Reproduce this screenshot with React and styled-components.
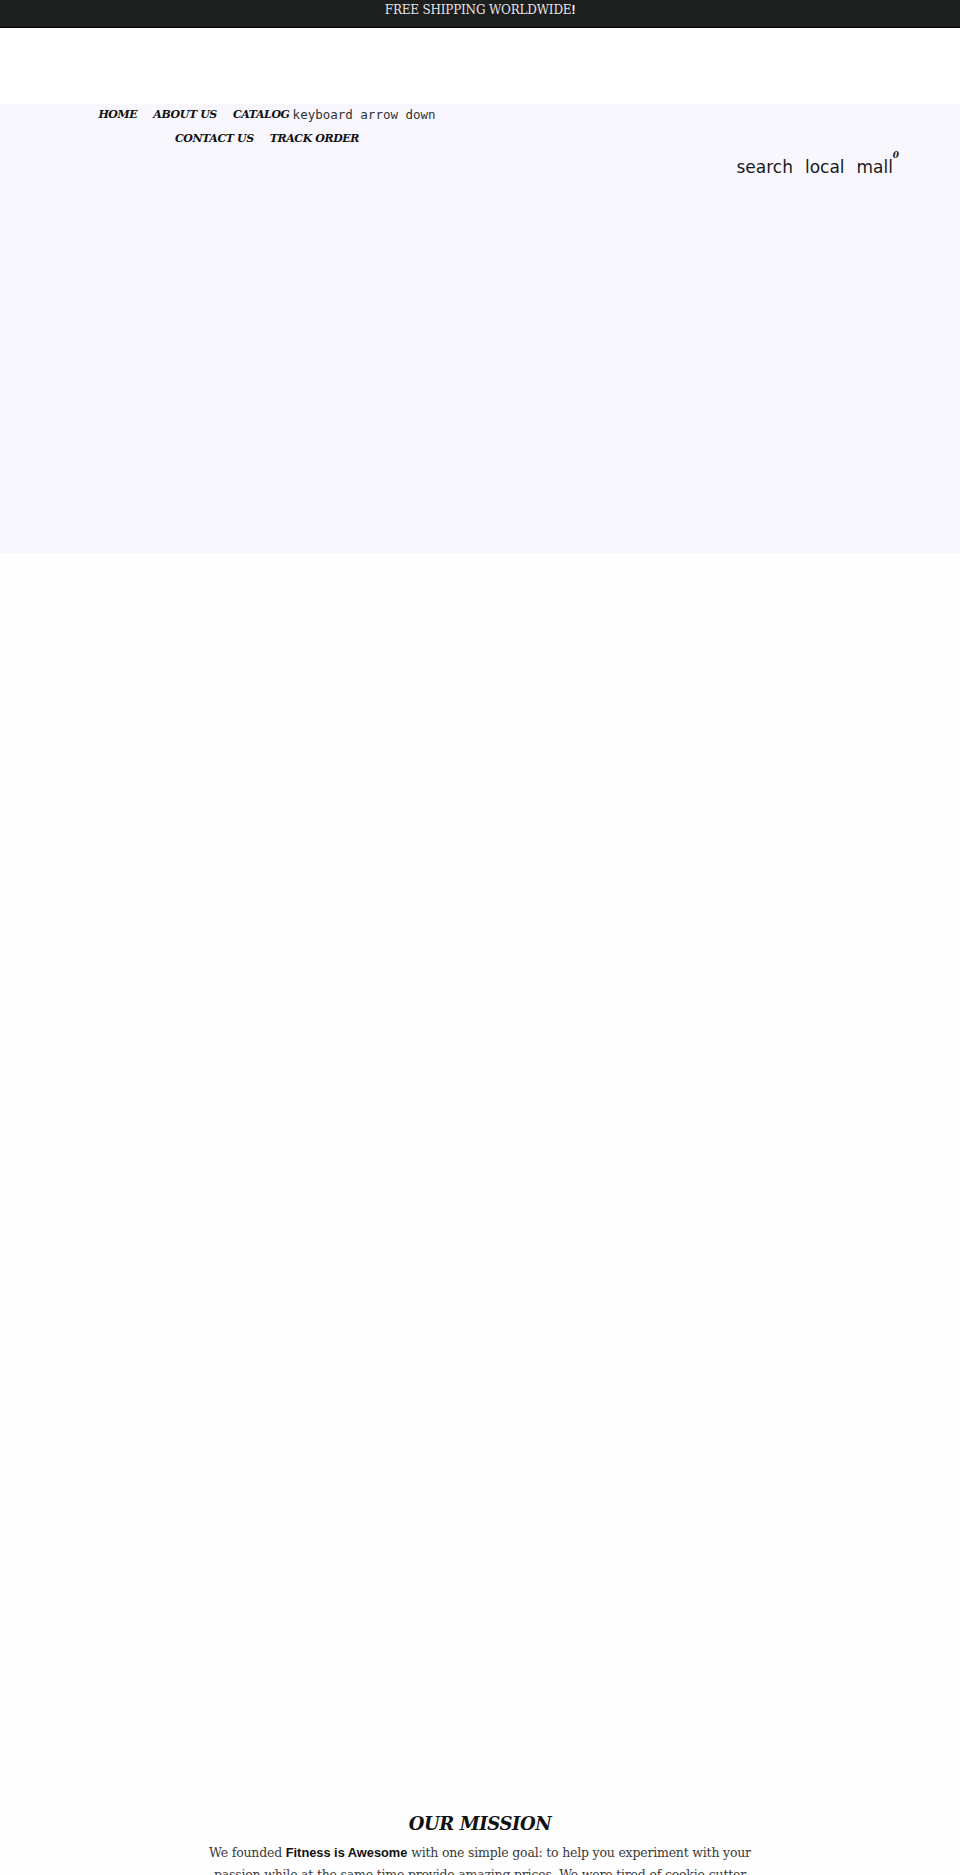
import React from "react";
import styled, { createGlobalStyle } from "styled-components";

const Global = createGlobalStyle`
  html, body { margin: 0; padding: 0; background: #fefefe; }
  body { font-family: "DejaVu Serif", serif; }
  * { box-sizing: border-box; }
`;

const Page = styled.div`
  width: 960px;
  min-height: 1875px;
  overflow: hidden;
  background: #fefefe;
`;

const Announcement = styled.div`
  height: 28px;
  background: #1d1e1e;
  border-bottom: 1px solid #050505;
  box-shadow: 0 1px 0 #8d8d8d;
  display: flex;
  justify-content: center;
  align-items: flex-start;
  padding-top: 2px;
  color: #e4e4e4;
  font-family: "DejaVu Serif", serif;
  font-size: 12px;
  letter-spacing: -0.2px;
  line-height: 16px;
`;

const Bang = styled.b`
  color: #fff;
  font-family: "Liberation Sans", sans-serif;
  font-weight: 700;
`;

const LogoStrip = styled.div`
  height: 76px;
  background: #fff;
`;

const HeaderBand = styled.header`
  height: 449px;
  background: #f8f7fd;
  display: flex;
  align-items: flex-start;
  padding: 0 67px 0 84px;
`;

const Nav = styled.nav`
  width: 366px;
  display: flex;
  flex-wrap: wrap;
  justify-content: center;
  row-gap: 4px;
`;

const NavLink = styled.a`
  display: inline-flex;
  align-items: center;
  height: 20px;
  padding: 0 8px;
  font-family: "DejaVu Serif", serif;
  font-style: italic;
  font-weight: 700;
  font-size: 11px;
  letter-spacing: -0.4px;
  color: #111;
  text-decoration: none;
  white-space: nowrap;
`;

const Ligature = styled.span`
  margin-left: 3px;
  font-family: "DejaVu Sans Mono", monospace;
  font-style: normal;
  font-weight: 400;
  font-size: 12.5px;
  letter-spacing: 0;
  color: #333;
`;

const Tools = styled.div`
  margin-left: auto;
  margin-top: 50px;
  display: flex;
  align-items: baseline;
  gap: 12px;
`;

const Tool = styled.span`
  position: relative;
  font-family: "DejaVu Sans", sans-serif;
  font-size: 17px;
  line-height: 26px;
  color: #1a1a1a;
`;

const Count = styled.sup`
  position: absolute;
  top: -4px;
  right: -6px;
  font-family: "DejaVu Serif", serif;
  font-style: italic;
  font-weight: 700;
  font-size: 9px;
  line-height: 10px;
`;

const Spacer = styled.div`
  height: 1257px;
`;

const Mission = styled.section`
  display: flex;
  flex-direction: column;
  align-items: center;
`;

const MissionTitle = styled.h2`
  margin: 0;
  font-family: "DejaVu Serif", serif;
  font-style: italic;
  font-weight: 700;
  font-size: 18px;
  line-height: 28px;
  letter-spacing: -0.4px;
  color: #111;
`;

const MissionText = styled.p`
  margin: 4px 0 0;
  width: 560px;
  text-align: center;
  font-family: "DejaVu Serif", serif;
  font-size: 12.5px;
  line-height: 22px;
  letter-spacing: -0.2px;
  color: #3a3a3a;
`;

const Brand = styled.strong`
  font-family: "Liberation Sans", sans-serif;
  font-weight: 700;
  font-size: 12.8px;
  letter-spacing: 0;
  color: #111;
`;

export default function App() {
  return (
    <Page>
      <Global />
      <Announcement>
        <span>
          FREE SHIPPING WORLDWIDE<Bang>!</Bang>
        </span>
      </Announcement>
      <LogoStrip />
      <HeaderBand>
        <Nav>
          <NavLink href="#">HOME</NavLink>
          <NavLink href="#">ABOUT US</NavLink>
          <NavLink href="#">
            CATALOG<Ligature>keyboard arrow down</Ligature>
          </NavLink>
          <NavLink href="#">CONTACT US</NavLink>
          <NavLink href="#">TRACK ORDER</NavLink>
        </Nav>
        <Tools>
          <Tool>search</Tool>
          <Tool>local</Tool>
          <Tool>
            mall<Count>0</Count>
          </Tool>
        </Tools>
      </HeaderBand>
      <Spacer />
      <Mission>
        <MissionTitle>OUR MISSION</MissionTitle>
        <MissionText>
          We founded <Brand>Fitness is Awesome</Brand> with one simple goal: to
          help you experiment with your passion while at the same time provide
          amazing prices. We were tired of cookie-cutter products and wanted
          to bring something new to the table.
        </MissionText>
      </Mission>
    </Page>
  );
}
